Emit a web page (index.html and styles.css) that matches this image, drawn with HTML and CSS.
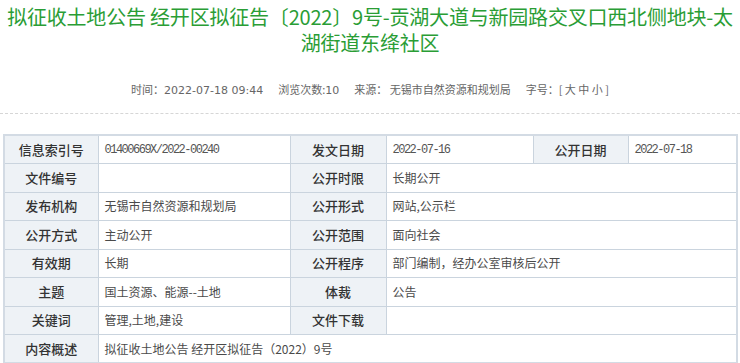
FILE: index.html
```html
<!DOCTYPE html>
<html lang="zh-CN">
<head>
<meta charset="utf-8">
<title>拟征收土地公告</title>
<link rel="stylesheet" href="styles.css">
</head>
<body>
<div class="page">
  <h1 class="title">拟征收土地公告 经开区拟征告〔2022〕9号-贡湖大道与新园路交叉口西北侧地块-太<br>湖街道东绛社区</h1>
  <div class="meta">
    <span class="meta-item">时间：<span class="num">2022-07-18 09:44</span></span>
    <span class="meta-item">浏览次数:<span class="num">10</span></span>
    <span class="meta-item">来源： 无锡市自然资源和规划局</span>
    <span class="meta-item">字号：[ 大 中 小 ]</span>
  </div>
  <div class="divider"></div>
  <table class="info">
    <colgroup>
      <col class="c1"><col class="c2"><col class="c3"><col class="c4"><col class="c5"><col class="c6">
    </colgroup>
    <tr>
      <th>信息索引号</th><td class="mono">01400669X/2022-00240</td>
      <th>发文日期</th><td class="mono">2022-07-16</td>
      <th>公开日期</th><td class="mono">2022-07-18</td>
    </tr>
    <tr>
      <th>文件编号</th><td></td>
      <th>公开时限</th><td colspan="3">长期公开</td>
    </tr>
    <tr>
      <th>发布机构</th><td>无锡市自然资源和规划局</td>
      <th>公开形式</th><td colspan="3">网站,公示栏</td>
    </tr>
    <tr>
      <th>公开方式</th><td>主动公开</td>
      <th>公开范围</th><td colspan="3">面向社会</td>
    </tr>
    <tr>
      <th>有效期</th><td>长期</td>
      <th>公开程序</th><td colspan="3">部门编制，经办公室审核后公开</td>
    </tr>
    <tr>
      <th>主题</th><td>国土资源、能源--土地</td>
      <th>体裁</th><td colspan="3">公告</td>
    </tr>
    <tr>
      <th>关键词</th><td>管理,土地,建设</td>
      <th>文件下载</th><td colspan="3"></td>
    </tr>
    <tr>
      <th>内容概述</th><td colspan="5">拟征收土地公告 经开区拟征告（2022）9号</td>
    </tr>
  </table>
</div>
</body>
</html>
```

FILE: styles.css
```css
* { box-sizing: border-box; }
html, body { margin: 0; padding: 0; background: #fff; }
body {
  font-family: "Noto Sans CJK SC", "Noto Sans", sans-serif;
  color: #333;
  width: 740px;
  overflow: hidden;
}
.page { padding: 4px 0 0; }
.title {
  margin: 0;
  font-size: 20px;
  font-weight: 400;
  line-height: 26px;
  color: #2a9d35;
  text-align: center;
  letter-spacing: -0.2px;
}
.meta {
  margin-top: 24px;
  display: flex;
  justify-content: center;
  gap: 15px;
  font-size: 11px;
  line-height: 18px;
  color: #666;
}
.meta .num { font-family: "DejaVu Sans", sans-serif; font-size: 11px; }
.divider {
  margin-top: 13px;
  border-top: 1px dashed #d6d6d6;
}
.info {
  margin: 20px 0 0 3px;
  width: 733px;
  border-collapse: collapse;
  table-layout: fixed;
  border: 2px solid #d3dbe4;
}
.c1 { width: 94px; }
.c2 { width: 192px; }
.c3 { width: 96px; }
.c4 { width: 147px; }
.c5 { width: 95px; }
.c6 { width: 109px; }
.info tr { height: 28.5px; }
.info th, .info td {
  border: 1px solid #cad4de;
  padding: 0 6px;
  font-size: 12px;
  line-height: 16px;
}
.info th {
  background: #eef2f6;
  font-size: 13px;
  font-weight: 500;
  color: #333;
  text-align: center;
}
.info td {
  text-align: left;
  color: #4a4a4a;
  font-weight: 400;
}
.info td.mono {
  font-family: "Liberation Mono", monospace;
  font-size: 12px;
  letter-spacing: -1.5px;
  color: #555;
}
```
